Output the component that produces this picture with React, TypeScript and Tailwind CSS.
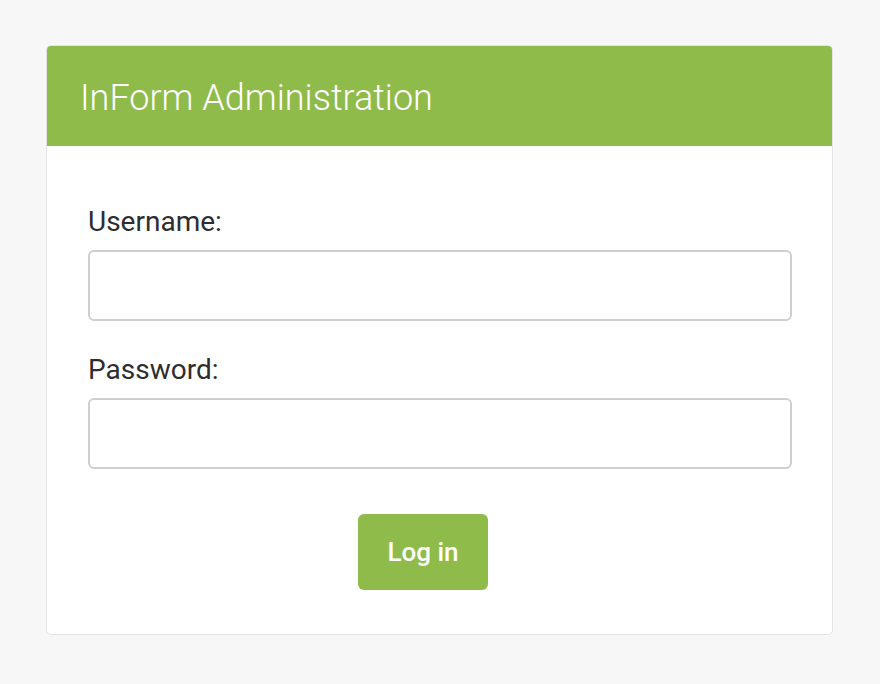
export default function App() {
  return (
    <div
      className="min-h-screen bg-[#f7f7f7] pt-[45px] pl-[46px]"
      style={{ fontFamily: "Roboto, 'Liberation Sans', sans-serif" }}
    >
      <div className="w-[787px] bg-white border border-[#e4e4e4] rounded-[5px] overflow-hidden">
        <div className="h-[100px] bg-[#8fbb4a] flex items-center px-[33px] pt-[3px]">
          <h1 className="text-[36px] leading-none font-light text-white">InForm Administration</h1>
        </div>
        <form className="pl-[41px] pr-[40px] pt-[62px] pb-[44px] flex flex-col">
          <label className="text-[28px] leading-none text-[#2e2e2e]">Username:</label>
          <input
            type="text"
            className="mt-[14px] h-[71px] w-full rounded-[6px] border-2 border-[#cfcfcf] bg-white outline-none"
          />
          <label className="mt-[35px] text-[28px] leading-none text-[#2e2e2e]">Password:</label>
          <input
            type="password"
            className="mt-[14px] h-[71px] w-full rounded-[6px] border-2 border-[#cfcfcf] bg-white outline-none"
          />
          <div className="mt-[45px] flex pl-[270px]">
            <button
              type="button"
              className="h-[76px] w-[130px] rounded-[6px] bg-[#8fbb4a] text-white text-[26px] font-medium"
            >
              Log in
            </button>
          </div>
        </form>
      </div>
    </div>
  );
}
